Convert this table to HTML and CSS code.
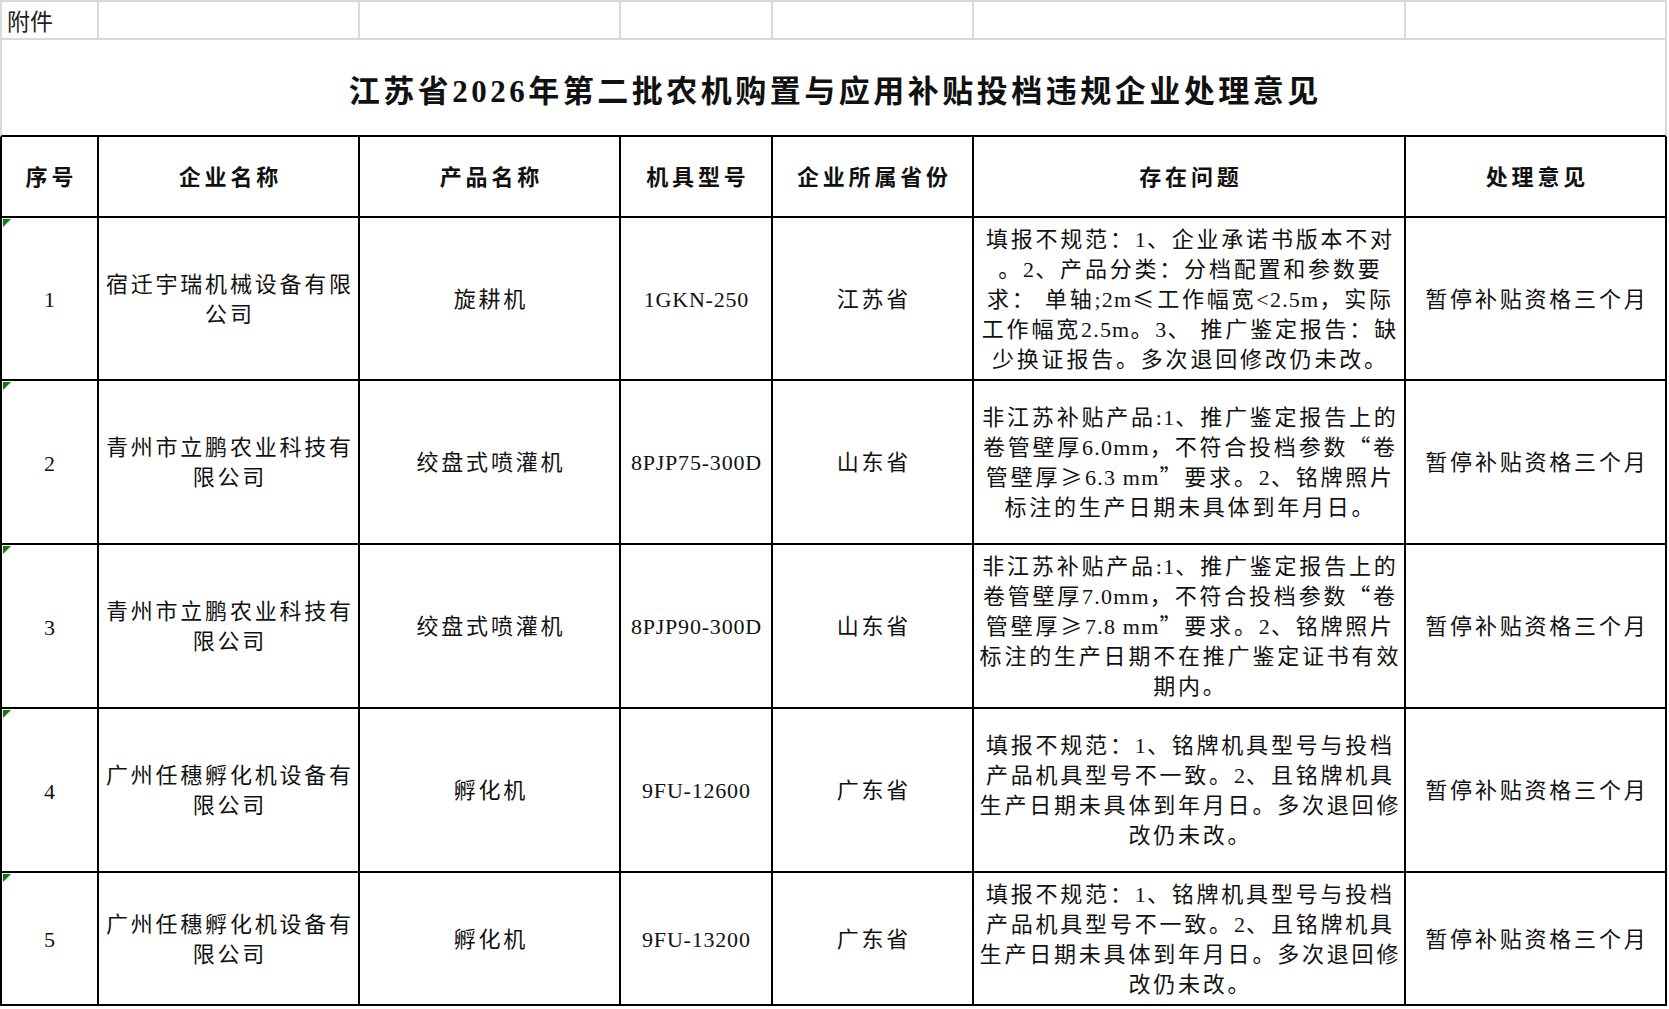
FILE: index.html
```html
<!DOCTYPE html>
<html lang="zh-CN">
<head>
<meta charset="utf-8">
<title>江苏省2026年第二批农机购置与应用补贴投档违规企业处理意见</title>
<link rel="stylesheet" href="styles.css">
</head>
<body>
<div class="sheet">
  <div class="c g top first attach">附件</div>
  <div class="c g top"></div>
  <div class="c g top"></div>
  <div class="c g top"></div>
  <div class="c g top"></div>
  <div class="c g top"></div>
  <div class="c g top"></div>

  <div class="c title">江苏省2026年第二批农机购置与应用补贴投档违规企业处理意见</div>

  <div class="c k first h">序号</div>
  <div class="c k h">企业名称</div>
  <div class="c k h">产品名称</div>
  <div class="c k h">机具型号</div>
  <div class="c k h">企业所属省份</div>
  <div class="c k h">存在问题</div>
  <div class="c k h">处理意见</div>

  <div class="c k first num"><span class="flag"></span>1</div>
  <div class="c k t">宿迁宇瑞机械设备有限<br>公司</div>
  <div class="c k t">旋耕机</div>
  <div class="c k code">1GKN-250</div>
  <div class="c k t">江苏省</div>
  <div class="c k t"><div class="para">填报不规范：<span class="lat">1</span>、企业承诺书版本不对<br>。<span class="lat">2</span>、产品分类：分档配置和参数要<br>求：&nbsp;单轴<span class="lat">;2m</span><span class="cjk">≤</span>工作幅宽<span class="lat">&lt;2.5m</span>，实际<br>工作幅宽<span class="lat">2.5m</span>。<span class="lat">3</span>、&nbsp;推广鉴定报告：缺<br>少换证报告。多次退回修改仍未改。</div></div>
  <div class="c k t">暂停补贴资格三个月</div>

  <div class="c k first num"><span class="flag"></span>2</div>
  <div class="c k t">青州市立鹏农业科技有<br>限公司</div>
  <div class="c k t">绞盘式喷灌机</div>
  <div class="c k code">8PJP75-300D</div>
  <div class="c k t">山东省</div>
  <div class="c k t"><div class="para">非江苏补贴产品<span class="lat">:1</span>、推广鉴定报告上的<br>卷管壁厚<span class="lat">6.0mm</span>，不符合投档参数<span class="cjk">“</span>卷<br>管壁厚<span class="cjk">≥</span><span class="lat">6.3 mm</span><span class="cjk">”</span>要求。<span class="lat">2</span>、铭牌照片<br>标注的生产日期未具体到年月日。</div></div>
  <div class="c k t">暂停补贴资格三个月</div>

  <div class="c k first num"><span class="flag"></span>3</div>
  <div class="c k t">青州市立鹏农业科技有<br>限公司</div>
  <div class="c k t">绞盘式喷灌机</div>
  <div class="c k code">8PJP90-300D</div>
  <div class="c k t">山东省</div>
  <div class="c k t"><div class="para">非江苏补贴产品<span class="lat">:1</span>、推广鉴定报告上的<br>卷管壁厚<span class="lat">7.0mm</span>，不符合投档参数<span class="cjk">“</span>卷<br>管壁厚<span class="cjk">≥</span><span class="lat">7.8 mm</span><span class="cjk">”</span>要求。<span class="lat">2</span>、铭牌照片<br>标注的生产日期不在推广鉴定证书有效<br>期内。</div></div>
  <div class="c k t">暂停补贴资格三个月</div>

  <div class="c k first num"><span class="flag"></span>4</div>
  <div class="c k t">广州任穗孵化机设备有<br>限公司</div>
  <div class="c k t">孵化机</div>
  <div class="c k code">9FU-12600</div>
  <div class="c k t">广东省</div>
  <div class="c k t"><div class="para">填报不规范：<span class="lat">1</span>、铭牌机具型号与投档<br>产品机具型号不一致。<span class="lat">2</span>、且铭牌机具<br>生产日期未具体到年月日。多次退回修<br>改仍未改。</div></div>
  <div class="c k t">暂停补贴资格三个月</div>

  <div class="c k first num"><span class="flag"></span>5</div>
  <div class="c k t">广州任穗孵化机设备有<br>限公司</div>
  <div class="c k t">孵化机</div>
  <div class="c k code">9FU-13200</div>
  <div class="c k t">广东省</div>
  <div class="c k t"><div class="para">填报不规范：<span class="lat">1</span>、铭牌机具型号与投档<br>产品机具型号不一致。<span class="lat">2</span>、且铭牌机具<br>生产日期未具体到年月日。多次退回修<br>改仍未改。</div></div>
  <div class="c k t">暂停补贴资格三个月</div>
</div>
</body>
</html>
```

FILE: styles.css
```css
html, body {
  margin: 0;
  padding: 0;
  background: #ffffff;
}

.sheet {
  display: grid;
  grid-template-columns: 99px 261px 261px 152px 201px 432px 261px;
  grid-template-rows: 40px 97px 81px 163px 164px 164px 164px 133px;
  width: 1667px;
  font-family: "Liberation Serif", "Noto Sans CJK SC", serif;
  color: #111111;
}

.c {
  box-sizing: border-box;
  position: relative;
  display: flex;
  align-items: center;
  justify-content: center;
  text-align: center;
  white-space: nowrap;
  border-right: 2px solid #000000;
  border-bottom: 2px solid #000000;
}

.para {
  text-align: center;
  line-height: 30px;
}

.g {
  border-right-color: #dadada;
  border-bottom-color: #dadada;
}

.g.top {
  border-top: 2px solid #dadada;
}

.g.first {
  border-left: 2px solid #dadada;
}

.k.first {
  border-left: 2px solid #000000;
}

.attach {
  justify-content: flex-start;
  padding-left: 5px;
  font-family: "Noto Sans CJK SC", sans-serif;
  font-size: 23px;
  line-height: 30px;
  color: #222222;
}

.title {
  grid-column: 1 / -1;
  border-left: 2px solid #dadada;
  border-right: 2px solid #dadada;
  border-bottom: 2px solid #000000;
  padding-top: 1px;
  font-size: 31px;
  font-weight: 700;
  letter-spacing: 3.5px;
  padding-left: 3.5px;
  color: #111111;
}

.h {
  font-size: 22px;
  font-weight: 700;
  letter-spacing: 3.8px;
  padding-left: 3.8px;
  padding-top: 3px;
  line-height: 30px;
}

.t {
  font-size: 22px;
  line-height: 30px;
  letter-spacing: 2.8px;
  padding-left: 2.8px;
  padding-top: 2px;
}

.t .lat {
  letter-spacing: 1.2px;
}

.t .cjk {
  font-family: "Noto Sans CJK SC", sans-serif;
  line-height: 1;
}

.num {
  font-size: 22px;
  line-height: 30px;
  padding-top: 3px;
}

.code {
  font-size: 22px;
  line-height: 30px;
  letter-spacing: 0.8px;
  padding-left: 0.8px;
  padding-top: 2px;
}

.flag {
  position: absolute;
  left: 1px;
  top: 1px;
  width: 0;
  height: 0;
  border-top: 8px solid #0a7d0a;
  border-right: 8px solid transparent;
}
```
